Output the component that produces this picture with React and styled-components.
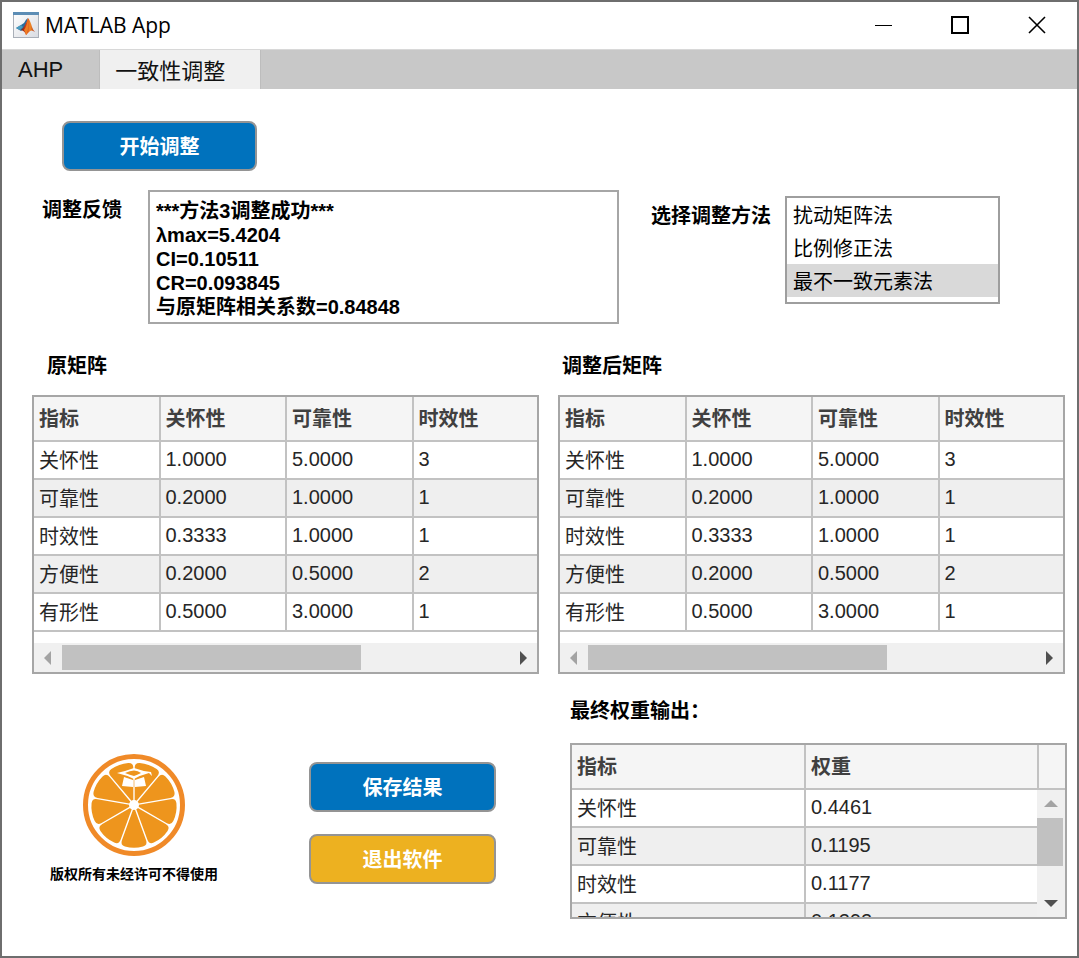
// module dependencies
import React, { useState } from 'react';
import styled, { createGlobalStyle } from 'styled-components';

const GlobalStyle = createGlobalStyle`
  * {
    box-sizing: border-box;
  }

  body {
    margin: 0;
    background: #FFFFFF;
    color: #000000;
    font-family: "Liberation Sans", "Noto Sans CJK SC", sans-serif;
    font-size: 20px;
    line-height: 24px;
  }

  button, select, textarea {
    font: inherit;
  }
`;

const Window = styled.div`
  display: flex;
  flex-direction: column;
  min-height: 100vh;
  border: 2px solid #6E6E6E;
`;

const TitleBar = styled.header`
  display: flex;
  align-items: center;
  height: 47px;
  padding: 0 2px 2px 11px;
`;

const Title = styled.h1`
  flex: 1;
  margin: 0 0 0 6px;
  font-family: "Open Sans", sans-serif;
  font-size: 21px;
  font-weight: 400;
`;

const WindowButton = styled.button`
  display: flex;
  align-items: center;
  justify-content: center;
  width: 77px;
  height: 45px;
  padding: 0;
  border: none;
  background: none;
`;

const TabBar = styled.div`
  display: flex;
  height: 40px;
  padding-left: 1px;
  border-top: 1px solid #D8D8D8;
  background: #C8C8C8;
`;

const Tab = styled.button`
  padding: ${props => props.$active ? '5px 35px 0 15px' : '0 36px 0 15px'};
  border: none;
  border-right: 1px solid #BDBDBD;
  background: ${props => props.$active ? '#F0F0F0' : '#C8C8C8'};
  color: #111111;
  font-size: 22px;
`;

const Body = styled.main`
  flex: 1;
  padding: 32px 12px 30px 30px;
`;

const ActionButton = styled.button`
  width: ${props => props.$wide ? '195px' : '187px'};
  height: 50px;
  padding: 2px 0 0;
  border: 2px solid #949494;
  border-radius: 8px;
  background: ${props => props.$warning ? '#EDB120' : '#0072BD'};
  color: #FFFFFF;
  font-weight: 700;
`;

const StartRow = styled.div`
  padding-left: 30px;
`;

const FeedbackRow = styled.div`
  display: flex;
  align-items: flex-start;
  margin-top: 19px;
  padding: 0 65px 0 10px;
`;

const Label = styled.label`
  padding-top: 8px;
  font-weight: 700;
  white-space: nowrap;
`;

const Feedback = styled.textarea`
  flex: 1;
  min-width: 0;
  height: 134px;
  margin: 0 32px 0 26px;
  padding: 7px 6px 0;
  border: 2px solid #A6A6A6;
  outline: none;
  resize: none;
  overflow: hidden;
  background: #FFFFFF;
  color: #000000;
  font-weight: 700;
`;

const MethodField = styled.div`
  display: flex;
  align-items: flex-start;
  gap: 14px;
  padding-top: 6px;
`;

const MethodList = styled.select`
  width: 215px;
  height: 108px;
  padding: 0;
  border: 2px solid #9E9E9E;
  border-radius: 0;
  outline: none;
  overflow: hidden;
  background: #FFFFFF;

  option {
    height: 33px;
    min-height: 33px;
    padding: 2px 6px;
    color: #000000;
  }

  option:checked {
    background: #D9D9D9 linear-gradient(#D9D9D9, #D9D9D9);
  }
`;

const Columns = styled.div`
  display: grid;
  grid-template-columns: minmax(0, 1fr) minmax(0, 1fr);
  gap: 19px;
  margin-top: ${props => props.$top};
`;

const Heading = styled.h2`
  margin: 0 0 17px;
  padding-left: ${props => props.$indent || '0'};
  font-size: 20px;
  font-weight: 700;
  line-height: 24px;
`;

const Frame = styled.div`
  overflow: hidden;
  border: 2px solid #A6A6A6;
  background: #FFFFFF;
`;

const Table = styled.table`
  width: calc(100% + 3px);
  table-layout: fixed;
  border-spacing: 0;

  th, td {
    padding: 0 5px;
    border-right: 2px solid #C2C2C2;
    border-bottom: 2px solid #C2C2C2;
    text-align: left;
    white-space: nowrap;
  }

  th:last-child, td:last-child {
    border-right: none;
  }

  thead th {
    height: 45px;
    background: #F5F5F5;
    color: #404040;
    font-weight: 700;
  }

  tbody tr:nth-child(even) {
    background: #EFEFEF;
  }

  tbody th, tbody td {
    height: 38px;
    padding-bottom: 3px;
    color: #262626;
    font-weight: 400;
  }

  tbody th {
    padding-top: 2px;
    padding-bottom: 0;
  }
`;

const HorizontalScroll = styled.div`
  display: flex;
  height: 29px;
  margin-top: 11px;
  padding: 2px 0;
  background: #F0F0F0;
`;

const VerticalScroll = styled.div`
  display: flex;
  flex: 1;
  flex-direction: column;
  background: #F0F0F0;
`;

const ScrollButton = styled.button`
  display: flex;
  align-items: center;
  justify-content: center;
  flex: 0 0 28px;
  padding: 0;
  border: none;
  background: none;
`;

const Track = styled.div`
  flex: 1;
  padding-right: ${props => props.$vertical ? '2px' : '0'};
`;

const Thumb = styled.div`
  width: ${props => props.$vertical ? '100%' : '67%'};
  height: ${props => props.$vertical ? '48px' : '100%'};
  background: #C1C1C1;
`;

const WeightFrame = styled(Frame)`
  display: grid;
  grid-template-columns: minmax(0, 1fr) 28px;
  height: 176px;
`;

const WeightTable = styled.div`
  height: 172px;
  overflow: hidden;
`;

const ScrollColumn = styled.div`
  display: flex;
  flex-direction: column;
  height: 172px;
`;

const Corner = styled.div`
  height: 45px;
  border-bottom: 2px solid #C2C2C2;
  border-left: 2px solid #C2C2C2;
  background: #F5F5F5;
`;

const FooterLeft = styled.div`
  display: flex;
  align-items: flex-start;
  padding: 55px 0 0 18px;
`;

const Brand = styled.figure`
  display: flex;
  flex: 0 0 168px;
  flex-direction: column;
  align-items: center;
  margin: 0;
`;

const Caption = styled.figcaption`
  margin-top: 6px;
  font-size: 14px;
  font-weight: 700;
  line-height: 24px;
  white-space: nowrap;
`;

const Actions = styled.div`
  display: flex;
  flex-direction: column;
  gap: 22px;
  margin-left: 91px;
  padding-top: 8px;
`;

const WeightSection = styled.section`
  margin-right: -2px;
  padding-left: 12px;

  h2 {
    margin-bottom: 20px;
  }
`;

// data
const matrix = [
  ['关怀性', '1.0000', '5.0000', '3'],
  ['可靠性', '0.2000', '1.0000', '1'],
  ['时效性', '0.3333', '1.0000', '1'],
  ['方便性', '0.2000', '0.5000', '2'],
  ['有形性', '0.5000', '3.0000', '1']
];

const weights = [
  ['关怀性', '0.4461'],
  ['可靠性', '0.1195'],
  ['时效性', '0.1177'],
  ['方便性', '0.1292']
];

const methods = ['扰动矩阵法', '比例修正法', '最不一致元素法'];

const feedback = [
  '***方法3调整成功***',
  'λmax=5.4204',
  'CI=0.10511',
  'CR=0.093845',
  '与原矩阵相关系数=0.84848'
].join('\n');

// icons
const MatlabIcon = () => (
  <svg width="26" height="26" viewBox="0 0 26 26" aria-hidden="true">
    <defs>
      <linearGradient id="paper" x1="0" y1="0" x2="1" y2="1">
        <stop offset="0" stopColor="#FFFFFF" />
        <stop offset="1" stopColor="#D9DCE2" />
      </linearGradient>
      <linearGradient id="peak" x1="0" y1="0" x2="1" y2="0">
        <stop offset="0" stopColor="#7A1D12" />
        <stop offset="0.4" stopColor="#D8431B" />
        <stop offset="0.65" stopColor="#F08A24" />
        <stop offset="1" stopColor="#B5301A" />
      </linearGradient>
    </defs>
    <rect x="0.5" y="0.5" width="25" height="25" fill="url(#paper)" stroke="#A9AFB8" />
    <rect x="0" y="0" width="26" height="3" fill="#5C8DB5" />
    <path d="M3 16 L8 13 L11 11 Q13 7 15 6 L12 16 L8 19 Z" fill="#2A6C9C" />
    <path d="M3 16 L8 13 L10 15 L7 18 Z" fill="#4A9CC0" />
    <path d="M15 6 Q17 8 19 15 Q20 18 22 20 Q18 17 16 20 L13 23 Q12 19 8 18 Q12 15 15 6 Z" fill="url(#peak)" />
    <path d="M15 7 Q16 13 14 22 L13 23 Q12 19 11 18 Q14 14 15 7 Z" fill="#EE7D23" />
  </svg>
);

const Arrow = ({ d, color }) => (
  <svg width="14" height="14" viewBox="0 0 14 14" aria-hidden="true">
    <path d={d} fill={color} />
  </svg>
);

const OrangeLogo = () => (
  <svg width="102" height="102" viewBox="-51 -51 102 102" aria-hidden="true">
    <circle r="48.5" fill="#FFFFFF" stroke="#F08A28" strokeWidth="5" />
    {[20, 60, 100, 140, 180, 220, 260, 300, 340].map(angle => (
      <path
        key={angle}
        transform={`rotate(${angle})`}
        d="M0 -2 L-12 -35 Q-14 -40 -9 -41.5 Q0 -44 9 -41.5 Q14 -40 12 -35 Z"
        fill="#EE951D"
      />
    ))}
    <circle r="5" fill="#FFFFFF" />
    <path d="M-17 -32 Q-8 -34 0 -37 Q8 -34 17 -33 L18 -29 L15 -32 Q7 -30 0 -26 Q-8 -30 -17 -32 Z" fill="#FFFFFF" />
    <path d="M-9 -32 Q-4 -34.5 0 -34.5 Q4 -34.5 7 -32 Q3 -30 0 -29 Q-4 -30 -9 -32 Z" fill="#EE951D" />
    <path d="M-10 -28 L-1 -25 V-18 L-12 -19 Z M10 -28 L1 -25 V-18 L12 -19 Z" fill="#FFFFFF" />
  </svg>
);

const DataTable = ({ label, columns, rows }) => (
  <Table aria-label={label}>
    <thead>
      <tr>
        {columns.map(column => <th key={column} scope="col">{column}</th>)}
      </tr>
    </thead>
    <tbody>
      {rows.map(([name, ...values]) => (
        <tr key={name}>
          <th scope="row">{name}</th>
          {values.map((value, index) => <td key={index}>{value}</td>)}
        </tr>
      ))}
    </tbody>
  </Table>
);

const MatrixPanel = ({ title, indent }) => (
  <section>
    <Heading $indent={indent}>{title}</Heading>
    <Frame>
      <DataTable label={title} columns={['指标', '关怀性', '可靠性', '时效性']} rows={matrix} />
      <HorizontalScroll>
        <ScrollButton aria-label="向左">
          <Arrow d="M10 0 V14 L3 7 Z" color="#A3A3A3" />
        </ScrollButton>
        <Track><Thumb /></Track>
        <ScrollButton aria-label="向右">
          <Arrow d="M4 0 V14 L11 7 Z" color="#505050" />
        </ScrollButton>
      </HorizontalScroll>
    </Frame>
  </section>
);

const App = () => {
  const [tab, setTab] = useState(1);
  const [method, setMethod] = useState(methods[2]);

  return (
    <Window>
      <GlobalStyle />
      <TitleBar>
        <MatlabIcon />
        <Title>MATLAB App</Title>
        <WindowButton aria-label="最小化">
          <svg width="18" height="18"><path d="M1 9.5 H18" stroke="#000000" /></svg>
        </WindowButton>
        <WindowButton aria-label="最大化">
          <svg width="18" height="18"><rect x="1" y="1" width="16" height="16" fill="none" stroke="#000000" strokeWidth="2" /></svg>
        </WindowButton>
        <WindowButton aria-label="关闭">
          <svg width="18" height="18"><path d="M1 1 L17 17 M17 1 L1 17" stroke="#000000" strokeWidth="1.6" /></svg>
        </WindowButton>
      </TitleBar>
      <TabBar role="tablist">
        {['AHP', '一致性调整'].map((name, index) => (
          <Tab
            key={name}
            role="tab"
            aria-selected={tab === index}
            $active={tab === index}
            onClick={() => setTab(index)}
          >
            {name}
          </Tab>
        ))}
      </TabBar>
      <Body>
        <StartRow>
          <ActionButton $wide>开始调整</ActionButton>
        </StartRow>
        <FeedbackRow>
          <Label htmlFor="feedback">调整反馈</Label>
          <Feedback id="feedback" readOnly value={feedback} />
          <MethodField>
            <Label htmlFor="method">选择调整方法</Label>
            <MethodList
              id="method"
              size={3}
              value={method}
              onChange={e => setMethod(e.target.value)}
            >
              {methods.map(name => <option key={name}>{name}</option>)}
            </MethodList>
          </MethodField>
        </FeedbackRow>
        <Columns $top="30px">
          <MatrixPanel title="原矩阵" indent="15px" />
          <MatrixPanel title="调整后矩阵" indent="4px" />
        </Columns>
        <Columns $top="25px">
          <FooterLeft>
            <Brand>
              <OrangeLogo />
              <Caption>版权所有未经许可不得使用</Caption>
            </Brand>
            <Actions>
              <ActionButton>保存结果</ActionButton>
              <ActionButton $warning>退出软件</ActionButton>
            </Actions>
          </FooterLeft>
          <WeightSection>
            <Heading>最终权重输出：</Heading>
            <WeightFrame>
              <WeightTable>
                <DataTable label="最终权重输出" columns={['指标', '权重']} rows={weights} />
              </WeightTable>
              <ScrollColumn>
                <Corner />
                <VerticalScroll>
                  <ScrollButton aria-label="向上">
                    <Arrow d="M0 10 H14 L7 3 Z" color="#A3A3A3" />
                  </ScrollButton>
                  <Track $vertical><Thumb $vertical /></Track>
                  <ScrollButton aria-label="向下">
                    <Arrow d="M0 4 H14 L7 11 Z" color="#505050" />
                  </ScrollButton>
                </VerticalScroll>
              </ScrollColumn>
            </WeightFrame>
          </WeightSection>
        </Columns>
      </Body>
    </Window>
  );
};

export default App;
